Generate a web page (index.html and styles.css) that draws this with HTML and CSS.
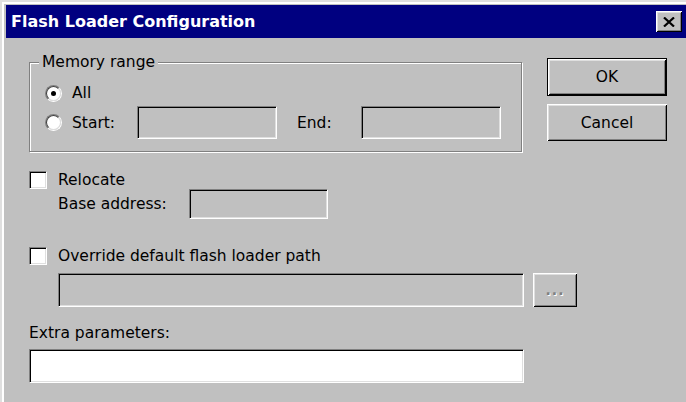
FILE: index.html
```html
<!DOCTYPE html>
<html lang="en">
<head>
<meta charset="utf-8">
<title>Flash Loader Configuration</title>
<link rel="stylesheet" href="styles.css">
</head>
<body>
<div class="window">
  <div class="titlebar">
    <span class="title">Flash Loader Configuration</span>
    <button class="close" type="button" aria-label="Close">
      <svg width="12" height="10" viewBox="0 0 12 10" aria-hidden="true">
        <path d="M1 0.5 L11 9.5 M11 0.5 L1 9.5" stroke="#000" stroke-width="2.2" fill="none"/>
      </svg>
    </button>
  </div>
  <div class="client">
    <div class="main">
      <div class="group">
        <span class="group-label">Memory range</span>
        <div class="radio-row">
          <span class="radio"><span class="radio-in"><span class="dot"></span></span></span>
          <span class="radio-text">All</span>
        </div>
        <div class="radio-row range-row">
          <span class="radio"><span class="radio-in"></span></span>
          <span class="radio-text start-text">Start:</span>
          <input class="field range-field" type="text">
          <span class="end-text">End:</span>
          <input class="field range-field" type="text">
        </div>
      </div>

      <label class="check-row relocate">
        <span class="check"></span>
        <span class="check-text">Relocate</span>
      </label>
      <div class="base-row">
        <span class="base-text">Base address:</span>
        <input class="field base-field" type="text">
      </div>

      <label class="check-row override">
        <span class="check"></span>
        <span class="check-text">Override default flash loader path</span>
      </label>
      <div class="path-row">
        <input class="field path-field" type="text">
        <button class="btn browse" type="button">...</button>
      </div>

      <div class="extra-label">Extra parameters:</div>
      <input class="field extra-field" type="text">
    </div>

    <div class="buttons">
      <button class="btn default" type="button">OK</button>
      <button class="btn cancel" type="button">Cancel</button>
    </div>
  </div>
</div>
</body>
</html>
```

FILE: styles.css
```css
html, body {
  margin: 0;
  padding: 0;
}

body {
  width: 686px;
  height: 402px;
  overflow: hidden;
  background: #c0c0c0;
  font-family: "DejaVu Sans", sans-serif;
  font-size: 15.5px;
  color: #000;
}

/* window frame */
.window {
  width: 686px;
  height: 402px;
  box-sizing: border-box;
  padding: 5px 0 0 6px;
  background: #c0c0c0;
  box-shadow: inset 2px 2px 0 #dfdfdf, inset 4px 4px 0 #fff;
}

.titlebar {
  height: 33px;
  background: #000080;
  display: flex;
  align-items: center;
  justify-content: space-between;
  padding: 0 4px 0 5px;
}

.title {
  color: #fff;
  font-weight: bold;
  font-size: 16px;
  line-height: 18px;
}

.close {
  width: 26px;
  height: 21px;
  margin: 0;
  padding: 0;
  border: 0;
  background: #c0c0c0;
  display: flex;
  align-items: center;
  justify-content: center;
  box-shadow: inset 1px 1px 0 #fff, inset -1px -1px 0 #000,
              inset 2px 2px 0 #dfdfdf, inset -2px -2px 0 #808080;
}

/* client area */
.client {
  display: flex;
  padding-left: 23px;
}

.main {
  width: 518px;
  display: flex;
  flex-direction: column;
  align-items: flex-start;
}

/* etched group box */
.group {
  position: relative;
  box-sizing: border-box;
  width: 493px;
  height: 90px;
  margin-top: 24px;
  padding: 20px 0 0 15px;
  border: 1px solid #808080;
  box-shadow: 1px 1px 0 #fff, inset 1px 1px 0 #fff;
}

.group-label {
  position: absolute;
  top: -9px;
  left: 9px;
  padding: 0 3px;
  line-height: 16px;
  background: #c0c0c0;
}

.radio-row {
  display: flex;
  align-items: center;
  height: 20px;
}

.range-row {
  height: 33px;
  margin-top: 3px;
}

.radio {
  box-sizing: border-box;
  width: 17px;
  height: 17px;
  border-radius: 50%;
  border: 1px solid;
  border-color: #808080 #fff #fff #808080;
  display: flex;
}

.radio-in {
  flex: 1;
  border-radius: 50%;
  border: 1px solid;
  border-color: #404040 #dfdfdf #dfdfdf #404040;
  background: #fff;
  display: flex;
  align-items: center;
  justify-content: center;
}

.dot {
  width: 5px;
  height: 5px;
  border-radius: 50%;
  background: #000;
}

.radio-text {
  margin-left: 10px;
}

.start-text {
  width: 65px;
}

.end-text {
  margin-left: 20px;
  width: 64px;
}

/* sunken edit fields */
.field {
  appearance: none;
  box-sizing: border-box;
  margin: 0;
  padding: 0 4px;
  font: inherit;
  height: 33px;
  border: 1px solid;
  border-color: #808080 #fff #fff #808080;
  box-shadow: inset 1px 1px 0 #000, inset -1px -1px 0 #dfdfdf;
  background: #c0c0c0;
  outline: none;
}

.range-field {
  width: 140px;
}

/* check boxes */
.check-row {
  display: flex;
  align-items: center;
  height: 18px;
}

.relocate {
  margin-top: 19px;
}

.override {
  margin-top: 28px;
}

.check {
  box-sizing: border-box;
  width: 18px;
  height: 18px;
  border: 1px solid;
  border-color: #808080 #fff #fff #808080;
  box-shadow: inset 1px 1px 0 #000, inset -1px -1px 0 #dfdfdf;
  background: #fff;
}

.check-text {
  margin-left: 11px;
}

.base-row {
  display: flex;
  align-items: center;
  padding-left: 29px;
}

.base-text {
  width: 131px;
}

.base-field {
  width: 139px;
  height: 30px;
}

.path-row {
  display: flex;
  align-items: center;
  padding-left: 29px;
  margin-top: 8px;
}

.path-field {
  width: 466px;
  height: 34px;
}

.extra-label {
  line-height: 18px;
  margin-top: 17px;
}

.extra-field {
  width: 495px;
  height: 34px;
  margin-top: 7px;
  background: #fff;
}

/* push buttons */
.buttons {
  display: flex;
  flex-direction: column;
  padding-top: 20px;
}

.btn {
  appearance: none;
  margin: 0;
  padding: 0;
  font: inherit;
  color: #000;
  width: 120px;
  height: 37px;
  border: 0;
  background: #c0c0c0;
  box-shadow: inset 1px 1px 0 #fff, inset -1px -1px 0 #000,
              inset 2px 2px 0 #dfdfdf, inset -2px -2px 0 #808080;
}

.default {
  height: 38px;
  border: 1px solid #000;
}

.cancel {
  margin-top: 8px;
}

.browse {
  width: 44px;
  height: 34px;
  margin-left: 9px;
  color: #808080;
  text-shadow: 1px 1px 0 #fff;
  font-size: 14px;
  font-weight: bold;
  letter-spacing: 1px;
}
```
